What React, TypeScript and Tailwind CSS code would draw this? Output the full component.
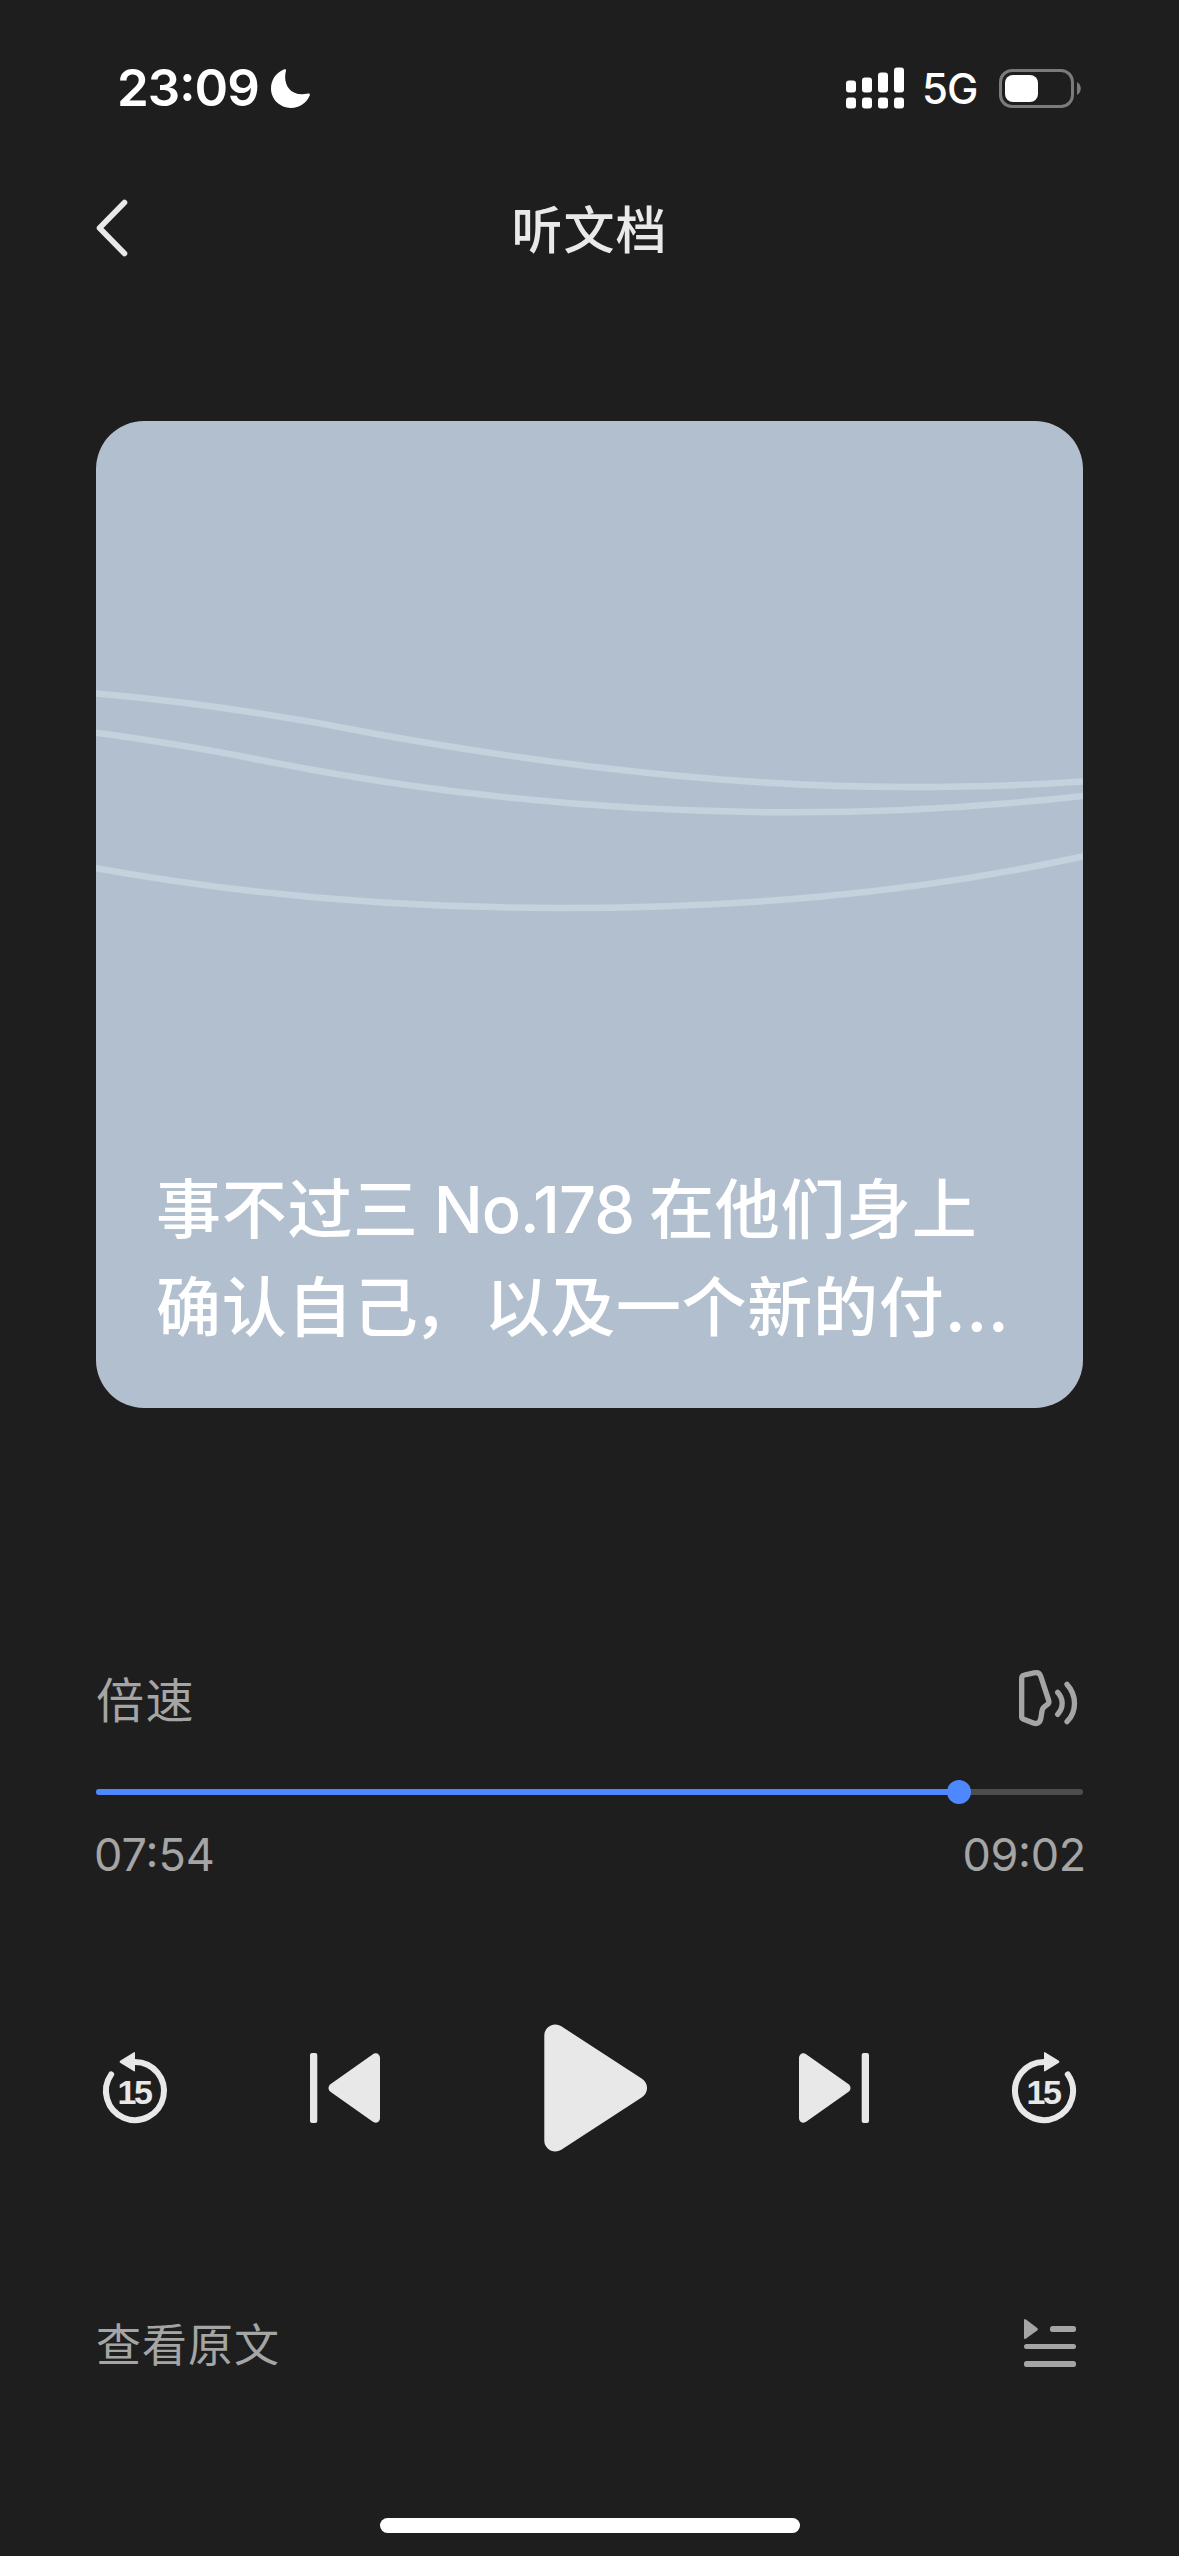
interface SkipIconProps {
  direction: "back" | "forward";
}

const UI_FONT = "font-[Inter,'Noto_Sans_CJK_SC',sans-serif]";

const player = {
  title: "听文档",
  elapsed: "07:54",
  total: "09:02",
  progress: 863 / 987,
};

function StatusBar() {
  return (
    <div className="flex h-[176px] items-start justify-between pt-[58px] pr-[98px] pl-[117px] text-white">
      <div className="flex items-center">
        <span className="w-[154px] text-[51px] leading-[60px] font-semibold tracking-[-1px] whitespace-nowrap [font-feature-settings:'case']">
          23:09
        </span>
        <svg width="39" height="39" viewBox="0 0 39 39" fill="currentColor">
          <path d="M12.8 0.4C14.2 -0.2 15.4 0.4 15 1.8C11.5 14 18.5 28.5 36.8 24.6C38.4 24.3 39.3 25 38.7 26.6C35.5 34.2 28.4 39 20 39C9 39 0 30.4 0 19.6C0 11 4.800 3.600 12.800 0.400Z" />
        </svg>
      </div>
      <div className="flex h-[60px] items-center">
        <svg width="58" height="42" viewBox="0 0 58 42" fill="currentColor">
          <rect x="0" y="13.500" width="10" height="12" rx="3" />
          <rect x="16" y="10.500" width="10" height="15" rx="3" />
          <rect x="32" y="5.500" width="10" height="20" rx="3" />
          <rect x="48" y="0.500" width="10" height="25" rx="3" />
          <rect x="0" y="30.500" width="10" height="11" rx="3" />
          <rect x="16" y="30.500" width="10" height="11" rx="3" />
          <rect x="32" y="30.500" width="10" height="11" rx="3" />
          <rect x="48" y="30.500" width="10" height="11" rx="3" />
        </svg>
        <span className="ml-[18px] w-[77px] pt-[2px] text-[42px] leading-[58px] font-medium tracking-[-1px]">5G</span>
        <svg width="82" height="39" viewBox="0 0 82 39">
          <rect x="1.500" y="1.500" width="72" height="36" rx="11.500" fill="none" stroke="#7b7b7b" strokeWidth="3" />
          <rect x="6" y="6" width="33" height="27" rx="8" fill="#fff" />
          <path d="M78 13C83 15.500 83 23.500 78 26Z" fill="#7b7b7b" />
        </svg>
      </div>
    </div>
  );
}

function Header() {
  return (
    <header className="grid h-[104px] grid-cols-[60px_1fr_60px] items-center px-24">
      <button aria-label="返回">
        <svg width="32" height="58" viewBox="0 0 32 58" fill="none" stroke="#e9e9e9" strokeWidth="5.600" strokeLinecap="round" strokeLinejoin="round">
          <path d="M28.500 3.500L3.500 29L28.500 54.500" />
        </svg>
      </button>
      <h1 className="pt-[5px] text-center text-[51px] leading-[60px] font-medium tracking-[1px] text-[#e9e9e9]">
        {player.title}
      </h1>
    </header>
  );
}

function Cover() {
  return (
    <section className="relative mx-24 mt-[141px] flex h-[987px] flex-col justify-end overflow-hidden rounded-[48px] bg-[#b2bfcf] px-[60px] pb-[51px]">
      <svg className="absolute inset-0" width="987" height="987" viewBox="0 0 987 987" fill="none" stroke="#c5d1dd" strokeWidth="6.500">
        <path d="M-4 272.200L0 272.600C95 281 188 294.500 283 313.500C459 345 634 366 810 366C870 366 928 364.500 991 360.200" />
        <path d="M-4 311L0 311.700C54 319 107 327.500 159 338C338 374 517 391.300 696 391.300C794 391.300 890 386 991 374.500" />
        <path d="M-4 446.600L0 447.300C154 475 308 487 462 487C637 487 812 474 991 434.500" />
      </svg>
      <div className="relative text-[65px] leading-[98px] font-medium tracking-[0.700px] whitespace-nowrap text-white">
        <p>
          事不过三
          <span className="tracking-[-1px] [word-spacing:-1.5px]"> No.178 </span>
          在他们身上
        </p>
        <p>
          确认自己<span className="mr-[5px] -ml-[5px]">，</span>以及一个新的付
          <span className="text-[71px] leading-none">…</span>
        </p>
      </div>
    </section>
  );
}

function VoiceIcon() {
  return (
    <svg width="67" height="60" viewBox="0 0 201 180" fill="none" stroke="#a5a5a5" strokeWidth="16" strokeLinecap="round" strokeLinejoin="round">
      <path d="M17 31C17 25 20 22 25 21L54 14.500C63 12.500 71 15 74 24L98 97C100 103 97 108 92 111C82 117 79 120 78 129L75 148C73 163 65 170 52 165L23 154C19 152 17 150 17 146Z" />
      <path d="M125 73C143 92 143 120 125 139" />
      <path d="M153 49C183 82 183 131 153 161" />
    </svg>
  );
}

function ProgressBar() {
  const percent = `${player.progress * 100}%`;

  return (
    <div className="relative mt-[52px] flex h-6 items-center">
      <div className="h-1.5 w-full overflow-hidden rounded-full bg-[#4d4d4d]">
        <div className="h-full bg-[#4d88ff]" style={{ width: percent }} />
      </div>
      <div className="absolute size-6 -translate-x-1/2 rounded-full bg-[#4d88ff]" style={{ left: percent }} />
    </div>
  );
}

function SkipIcon({ direction }: SkipIconProps) {
  return (
    <svg width="78" height="78" viewBox="0 0 78 78" fill="#e8e8e8">
      <g transform={direction === "forward" ? "translate(78 0) scale(-1 1)" : undefined}>
        <path d="M39 13A29 29 0 1 1 15.200 25.400" fill="none" stroke="#e8e8e8" strokeWidth="6" strokeLinecap="round" />
        <path d="M23.600 12.700Q23.600 12 24.500 11.400L38 3.200Q39 2.600 39 3.800V21.600Q39 22.800 38 22.200L24.500 14Q23.600 13.400 23.600 12.700Z" />
      </g>
      <text x="38" y="55" textAnchor="middle" className="font-['Liberation_Sans',sans-serif] text-[34px] font-bold tracking-[-2.5px]">
        15
      </text>
    </svg>
  );
}

function TrackIcon({ direction }: SkipIconProps) {
  return (
    <svg width="70" height="70" viewBox="0 0 70 70" fill="#e8e8e8">
      <g transform={direction === "back" ? "translate(70 0) scale(-1 1)" : undefined}>
        <path d="M4.500 4.800V65.200L47 35Z" stroke="#e8e8e8" strokeWidth="9" strokeLinejoin="round" />
        <rect x="62.700" y="0" width="7.300" height="70" rx="2" />
      </g>
    </svg>
  );
}

function Controls() {
  return (
    <div className="mt-[139px] flex h-32 items-center justify-between">
      <button aria-label="后退15秒">
        <SkipIcon direction="back" />
      </button>
      <button aria-label="上一篇">
        <TrackIcon direction="back" />
      </button>
      <button aria-label="播放">
        <svg width="147" height="128" viewBox="0 0 147 128" fill="#e8e8e8">
          <path d="M39.300 11.500V116.500L120 64Z" stroke="#e8e8e8" strokeWidth="22" strokeLinejoin="round" />
        </svg>
      </button>
      <button aria-label="下一篇">
        <TrackIcon direction="forward" />
      </button>
      <button aria-label="快进15秒">
        <SkipIcon direction="forward" />
      </button>
    </div>
  );
}

export default function App() {
  return (
    <main className={`flex h-[2556px] w-[1179px] flex-col overflow-hidden bg-[#1e1e1e] ${UI_FONT}`}>
      <StatusBar />
      <Header />
      <Cover />

      {/* Playback */}
      <section className="mt-[260px] px-24 text-[#a5a5a5]">
        <div className="flex h-[60px] items-center justify-between">
          <span className="pt-[5px] text-[48px] leading-[60px] tracking-[1.500px]">倍速</span>
          <VoiceIcon />
        </div>
        <ProgressBar />
        <div className="mt-[21px] flex h-[60px] items-center justify-between text-[45px] leading-[60px] [font-feature-settings:'case']">
          <span className="-ml-[2px]">{player.elapsed}</span>
          <span className="-mr-[3px] tracking-[-0.300px]">{player.total}</span>
        </div>
        <Controls />
      </section>

      {/* Footer */}
      <footer className="mt-[161px] flex h-[60px] items-center justify-between px-24 text-[#a5a5a5]">
        <span className="pt-[5px] text-[45px] leading-[60px] tracking-[1px]">查看原文</span>
        <svg width="60" height="60" viewBox="0 0 60 60" fill="currentColor">
          <path d="M1 7.500Q1 5 3 6.500L14.200 15Q15.800 16.200 14.200 17.400L3 25.500Q1 27 1 24.500Z" />
          <rect x="27" y="13" width="26" height="6" rx="2.500" />
          <rect x="1" y="31" width="52" height="5" rx="2.500" />
          <rect x="1" y="48" width="52" height="6" rx="2.500" />
        </svg>
      </footer>

      <div className="mx-auto mt-[145px] h-[15px] w-[420px] shrink-0 rounded-full bg-white" />
    </main>
  );
}
